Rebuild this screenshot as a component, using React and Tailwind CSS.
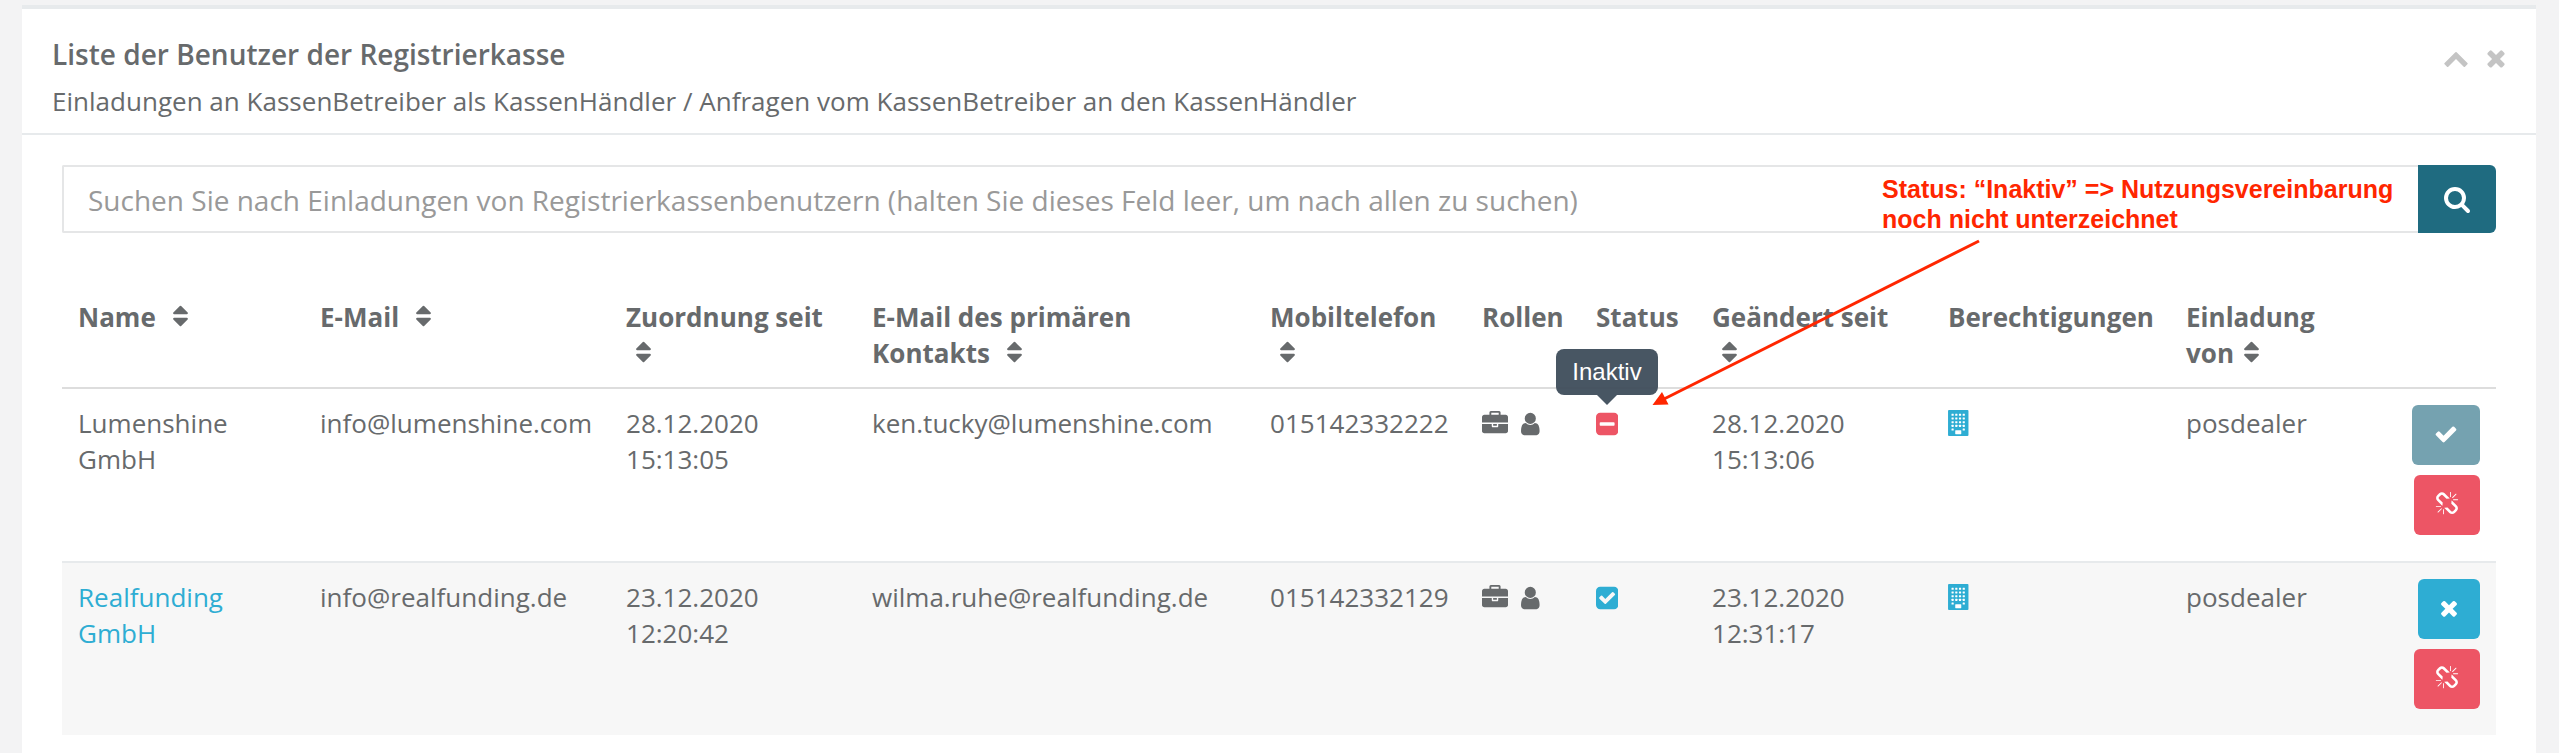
import React from "react";

const PATHS = {
  up: "M1683 1331l-166 165q-19 19-45 19t-45-19l-531-531-531 531q-19 19-45 19t-45-19l-166-165q-19-19-19-45.5t19-45.5l742-741q19-19 45-19t45 19l742 741q19 19 19 45.5t-19 45.5z",
  times: "M1490 1322q0 40-28 68l-136 136q-28 28-68 28t-68-28l-294-294-294 294q-28 28-68 28t-68-28l-136-136q-28-28-28-68t28-68l294-294-294-294q-28-28-28-68t28-68l136-136q28-28 68-28t68 28l294 294 294-294q28-28 68-28t68 28l136 136q28 28 28 68t-28 68l-294 294 294 294q28 28 28 68z",
  search: "M1216 832q0-185-131.5-316.5t-316.5-131.5-316.5 131.5-131.5 316.5 131.5 316.5 316.5 131.5 316.5-131.5 131.5-316.5zm512 832q0 52-38 90t-90 38q-54 0-90-38l-343-342q-179 124-399 124-143 0-273.5-55.5t-225-150-150-225-55.5-273.5 55.5-273.5 150-225 225-150 273.5-55.5 273.5 55.5 225 150 150 225 55.5 273.5q0 220-124 399l343 343q37 37 37 90z",
  check: "M1671 566q0 40-28 68l-724 724-136 136q-28 28-68 28t-68-28l-136-136-362-362q-28-28-28-68t28-68l136-136q28-28 68-28t68 28l294 295 656-657q28-28 68-28t68 28l136 136q28 28 28 68z",
  unlink: "M503 1271l-256 256q-10 9-23 9-12 0-23-9-9-10-9-23t9-23l256-256q10-9 23-9t23 9q9 10 9 23t-9 23zm169 41v320q0 14-9 23t-23 9-23-9-9-23v-320q0-14 9-23t23-9 23 9 9 23zm-224-224q0 14-9 23t-23 9h-320q-14 0-23-9t-9-23 9-23 23-9h320q14 0 23 9t9 23zm1264 128q0 120-85 203l-147 146q-83 83-203 83-121 0-204-85l-334-335q-21-21-42-56l239-18 273 274q28 28 68 27.500t68-27.500l147-146q28-28 28-67 0-40-28-68l-274-275 18-239q35 21 56 42l336 336q84 86 84 204zm-617-724l-239 18-273-274q-28-28-68-28-39 0-68 27l-147 146q-28 28-28 67 0 40 28 68l274 274-18 240q-35-21-56-42l-336-336q-84-86-84-204 0-120 85-203l147-146q83-83 203-83 121 0 204 85l334 335q21 21 42 56zm633 84q0 14-9 23t-23 9h-320q-14 0-23-9t-9-23 9-23 23-9h320q14 0 23 9t9 23zm-544-544v320q0 14-9 23t-23 9-23-9-9-23v-320q0-14 9-23t23-9 23 9 9 23zm407 151l-256 256q-11 9-23 9t-23-9q-9-10-9-23t9-23l256-256q10-9 23-9t23 9q9 10 9 23t-9 23z",
  briefcase: "M640 256h512v-128h-512v128zm1152 640v480q0 66-47 113t-113 47h-1472q-66 0-113-47t-47-113v-480h672v160q0 26 19 45t45 19h320q26 0 45-19t19-45v-160h672zm-768 0v128h-256v-128h256zm768-480v384h-1792v-384q0-66 47-113t113-47h352v-160q0-40 28-68t68-28h576q40 0 68 28t28 68v160h352q66 0 113 47t47 113z",
  user: "M1536 1399q0 109-62.500 187t-150.500 78h-854q-88 0-150.500-78t-62.500-187q0-85 8.500-160.500t31.500-152 58.500-131 94-89 134.500-34.500q131 128 313 128t313-128q76 0 134.500 34.500t94 89 58.500 131 31.500 152 8.500 160.500zm-256-887q0 159-112.500 271.500t-271.500 112.500-271.500-112.500-112.500-271.500 112.500-271.500 271.500-112.500 271.500 112.500 112.500 271.500z",
  minusSquare: "M1408 960v-128q0-26-19-45t-45-19h-896q-26 0-45 19t-19 45v128q0 26 19 45t45 19h896q26 0 45-19t19-45zm256-544v960q0 119-84.500 203.500t-203.500 84.500h-960q-119 0-203.500-84.500t-84.500-203.500v-960q0-119 84.500-203.500t203.500-84.500h960q119 0 203.500 84.500t84.500 203.500z",
  checkSquare: "M813 1299l614-614q19-19 19-45t-19-45l-102-102q-19-19-45-19t-45 19l-467 467-211-211q-19-19-45-19t-45 19l-102 102q-19 19-19 45t19 45l358 358q19 19 45 19t45-19zm851-883v960q0 119-84.500 203.500t-203.500 84.500h-960q-119 0-203.500-84.500t-84.500-203.500v-960q0-119 84.500-203.500t203.500-84.500h960q119 0 203.500 84.500t84.500 203.500z",
  sort: "M1408 1088q0 26-19 45l-448 448q-19 19-45 19t-45-19l-448-448q-19-19-19-45t19-45 45-19h896q26 0 45 19t19 45zm0-384q0 26-19 45t-45 19h-896q-26 0-45-19t-19-45 19-45l448-448q19-19 45-19t45 19l448 448q19 19 19 45z",
};

function Icon({ name, box = "0 0 1792 1792", className }) {
  return (
    <svg viewBox={box} fill="currentColor" className={className}>
      <path d={PATHS[name]} />
    </svg>
  );
}

function Sort({ tight }) {
  return (
    <Icon
      name="sort"
      box="384 0 1024 1792"
      className={"inline-block h-[26px] w-[15px] align-[-2px] " + (tight ? "ml-[3px]" : "ml-[10px]")}
    />
  );
}

function Building() {
  const cells = [];
  for (let r = 0; r < 5; r++)
    for (let c = 0; c < 4; c++)
      if (r < 4 || c === 0 || c === 3) cells.push([256 + c * 256, 256 + r * 256]);
  return (
    <svg viewBox="0 0 1408 1792" className="mt-[5px] block h-[26px] w-[20.500px] text-[#2eadd3]">
      <rect width="1408" height="1792" rx="64" fill="currentColor" />
      {cells.map(([x, y]) => (
        <rect key={x + "-" + y} x={x - 16} y={y} width="150" height="140" rx="24" fill="#fff" />
      ))}
      <rect x="496" y="1400" width="416" height="264" rx="32" fill="#fff" />
    </svg>
  );
}

const btn = "flex h-[60px] items-start justify-center rounded-[6px] pt-[17px] text-white";

function Row({ name, link, email, assigned, contact, phone, active, changed, striped }) {
  const cell = "px-4 pb-4";
  return (
    <tr
      className={
        "align-top " + (striped ? "border-t-2 border-[#e7eaec] bg-[#f7f7f7] " : "")
      }
    >
      <td className={cell + " pt-4"}>
        {name.map((t) => (
          <div key={t} className={link ? "text-[#2eadd3]" : ""}>{t}</div>
        ))}
      </td>
      <td className={cell + " pt-4"}>{email}</td>
      <td className={cell + " pt-4"}>{assigned}</td>
      <td className={cell + " pt-4"}>{contact}</td>
      <td className={cell + " pt-4"}>{phone}</td>
      <td className={cell + " pt-4"}>
        <div className="flex gap-[13px] pt-[6px]">
          <Icon name="briefcase" className="h-[26px] w-[26px]" />
          <Icon name="user" box="256 0 1280 1792" className="h-[26px] w-[18.600px]" />
        </div>
      </td>
      <td className={cell + " pt-4"}>
        <div className="relative flex pt-[6px]">
          <Icon
            name={active ? "checkSquare" : "minusSquare"}
            box="128 0 1536 1792"
            className={"h-[26px] w-[22.300px] " + (active ? "text-[#2eadd3]" : "text-[#ed5565]")}
          />
          {!active && (
            <div className="absolute -top-[56px] left-[11px] flex -translate-x-1/2 flex-col items-center opacity-95">
              <div className="flex h-[46px] w-[102px] items-center justify-center rounded-[8px] bg-[#3f4d5b] font-['Liberation_Sans',sans-serif] text-[24px] leading-none text-white">
                Inaktiv
              </div>
              <svg viewBox="0 0 20 10" className="h-[10px] w-[20px] text-[#3f4d5b]">
                <path d="M0 0H20L10 10Z" fill="currentColor" />
              </svg>
            </div>
          )}
        </div>
      </td>
      <td className={cell + " pt-4"}>{changed}</td>
      <td className={cell + " pt-4"}><Building /></td>
      <td className={cell + " pt-4"}>posdealer</td>
      <td className="p-4 pb-[26px]">
        <div className="flex flex-col items-end gap-[10px]">
          {active ? (
            <button className={btn + " w-[62px] bg-[#2eadd3]"}>
              <Icon name="times" className="h-6 w-6" />
            </button>
          ) : (
            <button className={btn + " w-[68px] bg-[#75a2b0]"}>
              <Icon name="check" className="h-6 w-6" />
            </button>
          )}
          <button className={btn + " w-[66px] bg-[#ed5565]"}>
            <Icon name="unlink" className="h-6 w-6" />
          </button>
        </div>
      </td>
    </tr>
  );
}

export default function App() {
  return (
    <div className="relative h-[753px] w-[2559px] overflow-hidden bg-[#f3f3f4] pt-[5px] pr-[23px] pl-[22px] font-['Open_Sans','Noto_Sans',sans-serif] text-[26px] leading-[36px] tracking-[0.015px] text-[#676a6c]">
      <div className="h-full border-t-4 border-[#e7eaec] bg-white">
        <header className="flex h-[126px] justify-between border-b-2 border-[#e7eaec] pr-[27px] pl-[30px]">
          <div className="pt-[27px]">
            <h5 className="text-[28px] leading-[36px] font-semibold">Liste der Benutzer der Registrierkasse</h5>
            <p className="mt-[11px]">
              Einladungen an KassenBetreiber als KassenHändler / Anfragen vom KassenBetreiber an den KassenHändler
            </p>
          </div>
          <div className="flex gap-[14px] pt-[36px] text-[#c4c4c4]">
            <Icon name="up" className="h-[26px] w-[26px]" />
            <Icon name="times" className="h-[26px] w-[26px]" />
          </div>
        </header>

        <main className="px-10 pt-[30px]">
          <div className="flex h-[68px]">
            <input
              className="min-w-0 flex-1 rounded-l-[2px] border-2 border-r-0 border-[#e5e6e7] bg-white px-6 pt-[2px] text-[28px] tracking-normal placeholder:text-[#999999] placeholder:opacity-100"
              placeholder="Suchen Sie nach Einladungen von Registrierkassenbenutzern (halten Sie dieses Feld leer, um nach allen zu suchen)"
            />
            <button className="flex w-[78px] justify-center rounded-r-[6px] bg-[#1f6b80] pt-[20px] text-white">
              <Icon name="search" className="h-7 w-7" />
            </button>
          </div>

          <table className="mt-[50px] w-[2434px] table-fixed border-collapse">
            <colgroup>
              <col className="w-[242px]" />
              <col className="w-[306px]" />
              <col className="w-[246px]" />
              <col className="w-[398px]" />
              <col className="w-[212px]" />
              <col className="w-[114px]" />
              <col className="w-[116px]" />
              <col className="w-[236px]" />
              <col className="w-[238px]" />
              <col className="w-[180px]" />
              <col />
            </colgroup>
            <thead>
              <tr className="border-b-2 border-[#dddddd] text-left align-top font-bold [&>th]:p-4 [&>th]:whitespace-nowrap">
                <th>Name <Sort /></th>
                <th>E-Mail <Sort /></th>
                <th>Zuordnung seit<br /><Sort /></th>
                <th>E-Mail des primären<br />Kontakts <Sort /></th>
                <th>Mobiltelefon<br /><Sort /></th>
                <th>Rollen</th>
                <th>Status</th>
                <th>Geändert seit<br /><Sort /></th>
                <th>Berechtigungen</th>
                <th>Einladung<br />von <Sort tight /></th>
                <th />
              </tr>
            </thead>
            <tbody>
              <Row
                name={["Lumenshine", "GmbH"]}
                email="info@lumenshine.com"
                assigned="28.12.2020 15:13:05"
                contact="ken.tucky@lumenshine.com"
                phone="015142332222"
                changed="28.12.2020 15:13:06"
              />
              <Row
                name={["Realfunding", "GmbH"]}
                link
                active
                striped
                email="info@realfunding.de"
                assigned="23.12.2020 12:20:42"
                contact="wilma.ruhe@realfunding.de"
                phone="015142332129"
                changed="23.12.2020 12:31:17"
              />
            </tbody>
          </table>
        </main>
      </div>

      <div className="absolute top-[174px] left-[1882px] font-['Liberation_Sans',sans-serif] text-[25px] leading-[30px] font-bold tracking-normal whitespace-nowrap text-[#ff2600]">
        Status: “Inaktiv” =&gt; Nutzungsvereinbarung
        <br />
        noch nicht unterzeichnet
      </div>
      <svg viewBox="0 0 330 168" className="absolute top-[239px] left-[1652px] h-[168px] w-[330px] text-[#ff2600]">
        <path d="M327 2L12 160" stroke="currentColor" strokeWidth="3" />
        <path d="M0.500 166L10 153L16.500 165.500Z" fill="currentColor" />
      </svg>
    </div>
  );
}
